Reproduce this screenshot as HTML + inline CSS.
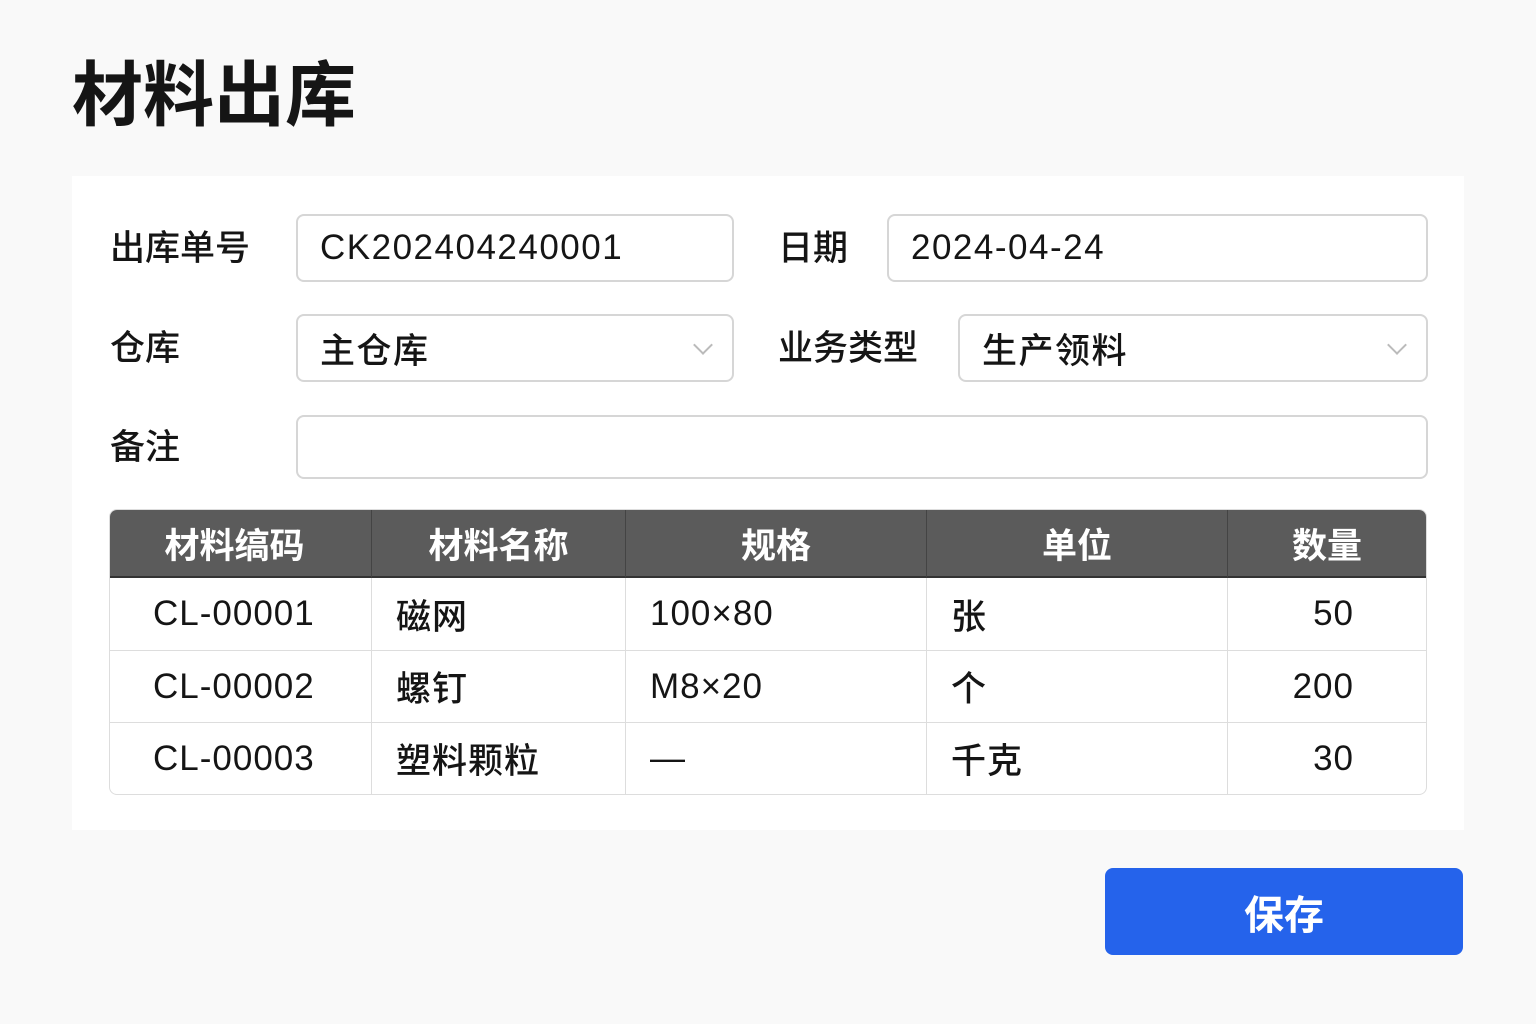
<!DOCTYPE html>
<html><head><meta charset="utf-8"><style>
*{margin:0;padding:0;box-sizing:border-box}
body{width:1536px;height:1024px;background:#f9f9f9;font-family:"Liberation Sans","Noto Sans CJK SC",sans-serif;color:#151515;position:relative;overflow:hidden}
.a{position:absolute}
.card{left:72px;top:176px;width:1392px;height:654px;background:#fff}
.lbl{font-size:35px;line-height:40px;font-weight:500}
.inp{border:2px solid #d6d6d6;border-radius:8px;background:#fff;font-size:35px;padding-left:22px;display:flex;align-items:center;letter-spacing:1.5px;font-weight:500}
.chev{position:absolute;right:22px;top:22px;width:14px;height:14px;border-right:2px solid #bbb;border-bottom:2px solid #bbb;transform:rotate(45deg)}
table{position:absolute;left:109px;top:509px;width:1318px;border-collapse:separate;border-spacing:0;border:1px solid #ddd;border-radius:8px;overflow:hidden;font-size:35px;font-weight:500}
th{background:#5b5b5b;color:#fff;height:68px;font-weight:bold;border-right:1px solid #444;border-bottom:2px solid #333}
td{height:72px;border-right:1px solid #ddd;border-top:1px solid #ddd;padding-left:24px;letter-spacing:1px}
th:last-child,td:last-child{border-right:none}
tr:nth-child(2) td{border-top:none}
</style></head><body>
<div class="a" style="left:72px;top:52px;font-size:71px;font-weight:bold;line-height:90px">材料出库</div>
<div class="a card"></div>
<div class="a lbl" style="left:110px;top:229px">出库单号</div>
<div class="a inp" style="left:296px;top:214px;width:438px;height:68px">CK202404240001</div>
<div class="a lbl" style="left:778px;top:229px">日期</div>
<div class="a inp" style="left:887px;top:214px;width:541px;height:68px">2024-04-24</div>
<div class="a lbl" style="left:110px;top:329px">仓库</div>
<div class="a inp" style="left:296px;top:314px;width:438px;height:68px">主仓库<span class="chev"></span></div>
<div class="a lbl" style="left:778px;top:329px">业务类型</div>
<div class="a inp" style="left:958px;top:314px;width:470px;height:68px">生产领料<span class="chev"></span></div>
<div class="a lbl" style="left:110px;top:428px">备注</div>
<div class="a inp" style="left:296px;top:415px;width:1132px;height:64px"></div>
<table>
<tr><th style="width:262px;padding-right:12px">材料缟码</th><th style="width:254px">材料名称</th><th style="width:301px">规格</th><th style="width:301px">单位</th><th>数量</th></tr>
<tr><td style="padding-left:43px">CL-00001</td><td>磁网</td><td>100×80</td><td>张</td><td style="text-align:right;padding-right:72px">50</td></tr>
<tr><td style="padding-left:43px">CL-00002</td><td>螺钉</td><td>M8×20</td><td>个</td><td style="text-align:right;padding-right:72px">200</td></tr>
<tr><td style="padding-left:43px">CL-00003</td><td>塑料颗粒</td><td>—</td><td>千克</td><td style="text-align:right;padding-right:72px">30</td></tr>
</table>
<div class="a" style="left:1105px;top:868px;width:358px;height:87px;background:#2563eb;border-radius:8px;color:#fff;font-size:40px;font-weight:bold;display:flex;align-items:center;justify-content:center">保存</div>
</body></html>
